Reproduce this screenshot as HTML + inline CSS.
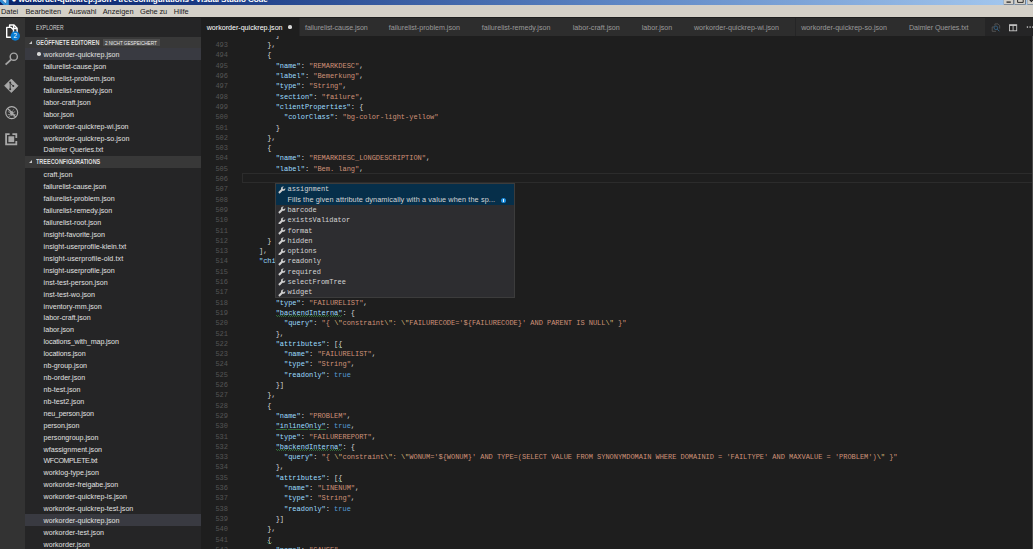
<!DOCTYPE html>
<html><head><meta charset="utf-8"><title>vscode</title>
<style>
*{box-sizing:border-box;margin:0;padding:0}
html,body{width:1033px;height:549px;overflow:hidden;background:#1e1e1e;font-family:"Liberation Sans",sans-serif;}
#root{position:absolute;left:0;top:0;width:1033px;height:549px;overflow:hidden;background:#1e1e1e}
.abs{position:absolute}
#title{left:0;top:0;width:1033px;height:5.2px;background:linear-gradient(90deg,#0a246a 0%,#1a3a84 20%,#5d86c4 60%,#a6caf0 100%);overflow:hidden}
#title .tt{position:absolute;left:11.5px;top:-5.1px;font-weight:bold;font-size:8.1px;line-height:10px;color:#fff;white-space:pre;letter-spacing:-0.092px}
#menu{left:0;top:5.2px;width:1033px;height:12.2px;background:#d4d0c8}
#menu span{position:absolute;top:2.1px;font-size:7.4px;line-height:9px;color:#1a1a1a;white-space:pre}
#act{left:0;top:17.5px;width:25px;height:532px;background:#333333}
#side{left:25px;top:17.5px;width:175.5px;height:532px;background:#252526}
#tabs{left:200.5px;top:17.5px;width:832.5px;height:18.9px;background:#252526;z-index:3}
.tab{position:absolute;z-index:4;top:17.5px;height:18.9px;background:#2d2d2d;border-right:0.6px solid #252526;color:#9a9a9a;font-size:7.12px;line-height:18.9px;white-space:pre;padding-left:5.6px}
.tab span{position:relative;top:1.1px}
.tab.act{background:#1e1e1e;color:#fff;padding-left:6.2px}
.tdot{position:absolute;right:7.6px;top:7.7px;width:3.7px;height:3.7px;border-radius:50%;background:#d8d8d8}
.hdr{position:absolute;left:25px;width:175.5px;height:11.9px;background:#383838;color:#dedede;font-weight:bold;font-size:5.95px;letter-spacing:-0.26px;line-height:11.9px;white-space:pre}
.hdr .tw{position:absolute;left:4.4px;top:4.6px;width:0;height:0;border-left:3.6px solid transparent;border-bottom:3.6px solid #c8c8c8}
.hdr .tx{position:absolute;left:11px;top:0.6px;font-size:6.3px;letter-spacing:0;transform:scaleX(0.872);transform-origin:0 50%}
.badge{position:absolute;left:77.6px;top:2px;height:7.8px;width:57px;background:#4d4d4d;color:#ececec;font-weight:normal;font-size:5.8px;line-height:7.8px;text-align:center;letter-spacing:-0.1px}
.badge b{font-weight:normal;position:relative;top:1.0px;display:inline-block;transform:scaleX(0.815);transform-origin:50% 50%;margin:0 -7px}
.row{position:absolute;left:25px;width:175.5px;height:11.92px;color:#e0e0e0;font-size:7.12px;line-height:11.92px;white-space:pre;padding-left:18.6px}
.row.sel{background:#393a41}
.row span{position:relative;top:1.75px}
.dot{position:absolute;left:12.2px;top:4.1px;width:3.6px;height:3.6px;border-radius:50%;background:#d8d8d8}
.cl{position:absolute;left:0;width:1033px;height:10.3px;line-height:10.3px;font-family:"Liberation Mono",monospace;font-size:7.0px;letter-spacing:-0.028px;white-space:pre}
.ln{position:absolute;left:215.4px;color:#555}
.ct{position:absolute;left:225.6px}
.k{color:#9cdcfe} .kw{color:#9cdcfe;background:repeating-linear-gradient(90deg,#3f9b4a 0 1px,transparent 1px 2.1px) 0 calc(100% - 0.9px)/100% 0.6px no-repeat,repeating-linear-gradient(90deg,transparent 0 1.05px,#3f9b4a 1.05px 2.1px) 0 calc(100% - 0.35px)/100% 0.6px no-repeat} .s{color:#ce9178} .p{color:#d4d4d4} .pw{color:#d4d4d4;background:repeating-linear-gradient(90deg,#3f9b4a 0 1px,transparent 1px 2.1px) 0 calc(100% - 0.9px)/100% 0.6px no-repeat,repeating-linear-gradient(90deg,transparent 0 1.05px,#3f9b4a 1.05px 2.1px) 0 calc(100% - 0.35px)/100% 0.6px no-repeat} .b{color:#569cd6} .e{color:#d7ba7d}
#curline{left:241.8px;top:173.2px;width:795px;height:10.3px;border:0.8px solid #2c2c2c}
#sw{left:275.0px;top:183.4px;width:240.4px;height:114.40px;background:#2d2d30;border:0.6px solid #3c3c3c;overflow:hidden}
#sw .selbg{position:absolute;left:0;top:0;width:100%;height:20.60px;background:#062f4a}
.si{position:absolute;left:0;width:100%;height:10.3px;line-height:10.3px;font-family:"Liberation Mono",monospace;font-size:7.0px;letter-spacing:-0.028px;color:#d4d4d4;white-space:pre}
.si span{position:absolute;left:11.5px}
.wr{position:absolute;left:1.9px;top:1.4px;width:7.8px;height:7.8px}
.wb{top:0;height:4.4px;overflow:hidden;background:#d4d0c8;border-right:0.8px solid #404040;border-bottom:0.8px solid #404040;border-left:0.6px solid #fff} .wb i{position:absolute;background:#000}
.sd{position:absolute;left:11.5px;height:10.3px;line-height:10.3px;font-size:7.3px;letter-spacing:0.1px;color:#d4d4d4;white-space:pre}
.info{position:absolute;left:225.4px;top:13.2px;width:5px;height:5px;border-radius:50%;background:#1d8fe0}
.info::after{content:'';position:absolute;left:2.1px;top:1.2px;width:0.9px;height:2.8px;background:#e8f2fb}
</style></head><body><div id="root">
<div id="title" class="abs"><svg class="abs" style="left:0;top:0" width="10" height="6" viewBox="0 0 10 6"><path d="M0 0 H2.2 L5.4 3.4 L6.4 2.4 V0 H8.8 V5.6 H6.6 L5.6 4.8 L4.4 5.6 L0 1.4 Z" fill="#2f8fd6"/><path d="M2.2 0 L5.4 3.2 L6.4 2.2 V0 Z" fill="#cfe6f7"/></svg><span class="tt">&#9679; workorder-quickrep.json - treeConfigurations - Visual Studio Code</span></div>
<div id="menu" class="abs"><span style="left:1px">Datei</span><span style="left:25.4px">Bearbeiten</span><span style="left:68.5px">Auswahl</span><span style="left:102.7px">Anzeigen</span><span style="left:140px;letter-spacing:-0.12px">Gehe zu</span><span style="left:173.8px">Hilfe</span></div>
<div id="act" class="abs"></div>
<div id="side" class="abs"></div>
<div class="abs" style="left:36px;top:23.2px;font-size:6.5px;line-height:10px;color:#d2d2d2;white-space:pre;transform:scaleX(0.78);transform-origin:0 50%">EXPLORER</div>
<div class="hdr" style="top:36.7px;height:11.65px"><i class="tw"></i><span class="tx">GEÖFFNETE EDITOREN</span><span class="badge"><b>2 NICHT GESPEICHERT</b></span></div>
<div class="hdr" style="top:155.9px"><i class="tw"></i><span class="tx">TREECONFIGURATIONS</span></div>
<div class="row sel" style="top:48.35px"><i class="dot"></i><span>workorder-quickrep.json</span></div>
<div class="row" style="top:60.27px"><span style="letter-spacing:-0.08px">failurelist-cause.json</span></div>
<div class="row" style="top:72.19px"><span>failurelist-problem.json</span></div>
<div class="row" style="top:84.11px"><span>failurelist-remedy.json</span></div>
<div class="row" style="top:96.03px"><span>labor-craft.json</span></div>
<div class="row" style="top:107.95px"><span>labor.json</span></div>
<div class="row" style="top:119.87px"><span>workorder-quickrep-wi.json</span></div>
<div class="row" style="top:131.79px"><span>workorder-quickrep-so.json</span></div>
<div class="row" style="top:143.71px"><span style="letter-spacing:-0.07px">Daimler Queries.txt</span></div>
<div class="row" style="top:168.64px"><span>craft.json</span></div>
<div class="row" style="top:180.56px"><span style="letter-spacing:-0.08px">failurelist-cause.json</span></div>
<div class="row" style="top:192.48px"><span>failurelist-problem.json</span></div>
<div class="row" style="top:204.40px"><span>failurelist-remedy.json</span></div>
<div class="row" style="top:216.32px"><span>failurelist-root.json</span></div>
<div class="row" style="top:228.24px"><span>insight-favorite.json</span></div>
<div class="row" style="top:240.16px"><span>insight-userprofile-klein.txt</span></div>
<div class="row" style="top:252.08px"><span style="letter-spacing:0.08px">insight-userprofile-old.txt</span></div>
<div class="row" style="top:264.00px"><span>insight-userprofile.json</span></div>
<div class="row" style="top:275.92px"><span>inst-test-person.json</span></div>
<div class="row" style="top:287.84px"><span>inst-test-wo.json</span></div>
<div class="row" style="top:299.76px"><span>inventory-mm.json</span></div>
<div class="row" style="top:311.68px"><span>labor-craft.json</span></div>
<div class="row" style="top:323.60px"><span>labor.json</span></div>
<div class="row" style="top:335.52px"><span style="letter-spacing:-0.1px">locations_with_map.json</span></div>
<div class="row" style="top:347.44px"><span style="letter-spacing:-0.08px">locations.json</span></div>
<div class="row" style="top:359.36px"><span>nb-group.json</span></div>
<div class="row" style="top:371.28px"><span>nb-order.json</span></div>
<div class="row" style="top:383.20px"><span>nb-test.json</span></div>
<div class="row" style="top:395.12px"><span>nb-test2.json</span></div>
<div class="row" style="top:407.04px"><span style="letter-spacing:-0.16px">neu_person.json</span></div>
<div class="row" style="top:418.96px"><span style="letter-spacing:-0.1px">person.json</span></div>
<div class="row" style="top:430.88px"><span>persongroup.json</span></div>
<div class="row" style="top:442.80px"><span>wfassignment.json</span></div>
<div class="row" style="top:454.72px"><span style="letter-spacing:-0.44px">WFCOMPLETE.txt</span></div>
<div class="row" style="top:466.64px"><span>worklog-type.json</span></div>
<div class="row" style="top:478.56px"><span>workorder-freigabe.json</span></div>
<div class="row" style="top:490.48px"><span>workorder-quickrep-is.json</span></div>
<div class="row" style="top:502.40px"><span>workorder-quickrep-test.json</span></div>
<div class="row sel" style="top:514.32px"><span>workorder-quickrep.json</span></div>
<div class="row" style="top:526.24px"><span>workorder-test.json</span></div>
<div class="row" style="top:538.16px"><span>workorder.json</span></div>
<div id="tabs" class="abs"></div>
<div class="tab act" style="left:200.5px;width:99.6px"><span>workorder-quickrep.json</span><i class="tdot"></i></div>
<div class="tab" style="left:299.5px;width:84.3px"><span style="letter-spacing:-0.08px">failurelist-cause.json</span></div>
<div class="tab" style="left:383.2px;width:93.6px"><span>failurelist-problem.json</span></div>
<div class="tab" style="left:476.2px;width:91.5px"><span>failurelist-remedy.json</span></div>
<div class="tab" style="left:567.1px;width:69.7px"><span>labor-craft.json</span></div>
<div class="tab" style="left:636.2px;width:52.8px"><span>labor.json</span></div>
<div class="tab" style="left:688.4px;width:107.8px"><span>workorder-quickrep-wi.json</span></div>
<div class="tab" style="left:795.6px;width:108.4px"><span>workorder-quickrep-so.json</span></div>
<div class="tab" style="left:903.4px;width:82.6px"><span style="letter-spacing:-0.07px">Daimler Queries.txt</span></div>
<div id="editor">
<div class="cl" style="top:29.80px"><span class="ct"><span class="p">            }</span></span></div>
<div class="cl" style="top:40.10px"><span class="ln">493</span><span class="ct"><span class="p">          },</span></span></div>
<div class="cl" style="top:50.40px"><span class="ln">494</span><span class="ct"><span class="p">          {</span></span></div>
<div class="cl" style="top:60.70px"><span class="ln">495</span><span class="ct"><span class="p">            </span><span class="k">"name"</span><span class="p">: </span><span class="s">"REMARKDESC"</span><span class="p">,</span></span></div>
<div class="cl" style="top:71.00px"><span class="ln">496</span><span class="ct"><span class="p">            </span><span class="k">"label"</span><span class="p">: </span><span class="s">"Bemerkung"</span><span class="p">,</span></span></div>
<div class="cl" style="top:81.30px"><span class="ln">497</span><span class="ct"><span class="p">            </span><span class="k">"type"</span><span class="p">: </span><span class="s">"String"</span><span class="p">,</span></span></div>
<div class="cl" style="top:91.60px"><span class="ln">498</span><span class="ct"><span class="p">            </span><span class="k">"section"</span><span class="p">: </span><span class="s">"failure"</span><span class="p">,</span></span></div>
<div class="cl" style="top:101.90px"><span class="ln">499</span><span class="ct"><span class="p">            </span><span class="k">"clientProperties"</span><span class="p">: {</span></span></div>
<div class="cl" style="top:112.20px"><span class="ln">500</span><span class="ct"><span class="p">              </span><span class="k">"colorClass"</span><span class="p">: </span><span class="s">"bg-color-light-yellow"</span></span></div>
<div class="cl" style="top:122.50px"><span class="ln">501</span><span class="ct"><span class="p">            }</span></span></div>
<div class="cl" style="top:132.80px"><span class="ln">502</span><span class="ct"><span class="p">          },</span></span></div>
<div class="cl" style="top:143.10px"><span class="ln">503</span><span class="ct"><span class="p">          {</span></span></div>
<div class="cl" style="top:153.40px"><span class="ln">504</span><span class="ct"><span class="p">            </span><span class="k">"name"</span><span class="p">: </span><span class="s">"REMARKDESC_LONGDESCRIPTION"</span><span class="p">,</span></span></div>
<div class="cl" style="top:163.70px"><span class="ln">505</span><span class="ct"><span class="p">            </span><span class="k">"label"</span><span class="p">: </span><span class="s">"Bem. lang"</span><span class="p">,</span></span></div>
<div class="cl" style="top:174.00px"><span class="ln">506</span><span class="ct"></span></div>
<div class="cl" style="top:184.30px"><span class="ln">507</span><span class="ct"></span></div>
<div class="cl" style="top:194.60px"><span class="ln">508</span><span class="ct"></span></div>
<div class="cl" style="top:204.90px"><span class="ln">509</span><span class="ct"></span></div>
<div class="cl" style="top:215.20px"><span class="ln">510</span><span class="ct"></span></div>
<div class="cl" style="top:225.50px"><span class="ln">511</span><span class="ct"></span></div>
<div class="cl" style="top:235.80px"><span class="ln">512</span><span class="ct"><span class="p">          }</span></span></div>
<div class="cl" style="top:246.10px"><span class="ln">513</span><span class="ct"><span class="p">        ],</span></span></div>
<div class="cl" style="top:256.40px"><span class="ln">514</span><span class="ct"><span class="p">        </span><span class="k">"children"</span><span class="p">: [</span></span></div>
<div class="cl" style="top:266.70px"><span class="ln">515</span><span class="ct"></span></div>
<div class="cl" style="top:277.00px"><span class="ln">516</span><span class="ct"></span></div>
<div class="cl" style="top:287.30px"><span class="ln">517</span><span class="ct"></span></div>
<div class="cl" style="top:297.60px"><span class="ln">518</span><span class="ct"><span class="p">            </span><span class="k">"type"</span><span class="p">: </span><span class="s">"FAILURELIST"</span><span class="p">,</span></span></div>
<div class="cl" style="top:307.90px"><span class="ln">519</span><span class="ct"><span class="p">            </span><span class="kw">"backendInterna"</span><span class="p">: {</span></span></div>
<div class="cl" style="top:318.20px"><span class="ln">520</span><span class="ct"><span class="p">              </span><span class="k">"query"</span><span class="p">: </span><span class="s">"{ </span><span class="e">\"</span><span class="s">constraint</span><span class="e">\"</span><span class="s">: </span><span class="e">\"</span><span class="s">FAILURECODE='${FAILURECODE}' AND PARENT IS NULL</span><span class="e">\"</span><span class="s"> }"</span></span></div>
<div class="cl" style="top:328.50px"><span class="ln">521</span><span class="ct"><span class="p">            },</span></span></div>
<div class="cl" style="top:338.80px"><span class="ln">522</span><span class="ct"><span class="p">            </span><span class="k">"attributes"</span><span class="p">: [</span><span class="pw">{</span></span></div>
<div class="cl" style="top:349.10px"><span class="ln">523</span><span class="ct"><span class="p">              </span><span class="k">"name"</span><span class="p">: </span><span class="s">"FAILURELIST"</span><span class="p">,</span></span></div>
<div class="cl" style="top:359.40px"><span class="ln">524</span><span class="ct"><span class="p">              </span><span class="k">"type"</span><span class="p">: </span><span class="s">"String"</span><span class="p">,</span></span></div>
<div class="cl" style="top:369.70px"><span class="ln">525</span><span class="ct"><span class="p">              </span><span class="k">"readonly"</span><span class="p">: </span><span class="b">true</span></span></div>
<div class="cl" style="top:380.00px"><span class="ln">526</span><span class="ct"><span class="p">            }]</span></span></div>
<div class="cl" style="top:390.30px"><span class="ln">527</span><span class="ct"><span class="p">          },</span></span></div>
<div class="cl" style="top:400.60px"><span class="ln">528</span><span class="ct"><span class="p">          {</span></span></div>
<div class="cl" style="top:410.90px"><span class="ln">529</span><span class="ct"><span class="p">            </span><span class="k">"name"</span><span class="p">: </span><span class="s">"PROBLEM"</span><span class="p">,</span></span></div>
<div class="cl" style="top:421.20px"><span class="ln">530</span><span class="ct"><span class="p">            </span><span class="kw">"inlineOnly"</span><span class="p">: </span><span class="b">true</span><span class="p">,</span></span></div>
<div class="cl" style="top:431.50px"><span class="ln">531</span><span class="ct"><span class="p">            </span><span class="k">"type"</span><span class="p">: </span><span class="s">"FAILUREREPORT"</span><span class="p">,</span></span></div>
<div class="cl" style="top:441.80px"><span class="ln">532</span><span class="ct"><span class="p">            </span><span class="kw">"backendInterna"</span><span class="p">: {</span></span></div>
<div class="cl" style="top:452.10px"><span class="ln">533</span><span class="ct"><span class="p">              </span><span class="k">"query"</span><span class="p">: </span><span class="s">"{ </span><span class="e">\"</span><span class="s">constraint</span><span class="e">\"</span><span class="s">: </span><span class="e">\"</span><span class="s">WONUM='${WONUM}' AND TYPE=(SELECT VALUE FROM SYNONYMDOMAIN WHERE DOMAINID = 'FAILTYPE' AND MAXVALUE = 'PROBLEM')</span><span class="e">\"</span><span class="s"> }"</span></span></div>
<div class="cl" style="top:462.40px"><span class="ln">534</span><span class="ct"><span class="p">            },</span></span></div>
<div class="cl" style="top:472.70px"><span class="ln">535</span><span class="ct"><span class="p">            </span><span class="k">"attributes"</span><span class="p">: [</span><span class="pw">{</span></span></div>
<div class="cl" style="top:483.00px"><span class="ln">536</span><span class="ct"><span class="p">              </span><span class="k">"name"</span><span class="p">: </span><span class="s">"LINENUM"</span><span class="p">,</span></span></div>
<div class="cl" style="top:493.30px"><span class="ln">537</span><span class="ct"><span class="p">              </span><span class="k">"type"</span><span class="p">: </span><span class="s">"String"</span><span class="p">,</span></span></div>
<div class="cl" style="top:503.60px"><span class="ln">538</span><span class="ct"><span class="p">              </span><span class="k">"readonly"</span><span class="p">: </span><span class="b">true</span></span></div>
<div class="cl" style="top:513.90px"><span class="ln">539</span><span class="ct"><span class="p">            }]</span></span></div>
<div class="cl" style="top:524.20px"><span class="ln">540</span><span class="ct"><span class="p">          },</span></span></div>
<div class="cl" style="top:534.50px"><span class="ln">541</span><span class="ct"><span class="p">          </span><span class="pw">{</span></span></div>
<div class="cl" style="top:544.80px"><span class="ln">542</span><span class="ct"><span class="p">            </span><span class="k">"name"</span><span class="p">: </span><span class="s">"CAUSE"</span><span class="p">,</span></span></div>
<div id="curline" class="abs"></div>
<div class="abs" style="left:1031.5px;top:36.4px;width:1.5px;height:513px;background:#4a4a4a"></div>
<div id="sw" class="abs"><div class="selbg"></div><i class="info"></i>
<div class="si" style="top:0.00px"><svg class="wr" viewBox="0 0 16 16"><path d="M14.8 4.2l-2.5 2.5-2.3-.6-.6-2.3 2.5-2.5c-1.5-.6-3.300-.3-4.500.9-1.200 1.200-1.500 2.900-1 4.400L1.300 11.700c-.6.6-.6 1.700 0 2.300l.7.7c.6.6 1.700.6 2.300 0l5.100-5.100c1.500.5 3.200.2 4.400-1 1.200-1.200 1.500-3 .9-4.500z" fill="#d0d0d0"/></svg><span>assignment</span></div>
<div class="sd" style="top:10.30px">Fills the given attribute dynamically with a value when the sp...</div>
<div class="si" style="top:20.60px"><svg class="wr" viewBox="0 0 16 16"><path d="M14.8 4.2l-2.5 2.5-2.3-.6-.6-2.3 2.5-2.5c-1.5-.6-3.300-.3-4.500.9-1.200 1.200-1.500 2.900-1 4.400L1.300 11.700c-.6.6-.6 1.700 0 2.300l.7.7c.6.6 1.700.6 2.300 0l5.100-5.100c1.500.5 3.200.2 4.400-1 1.200-1.200 1.500-3 .9-4.500z" fill="#d0d0d0"/></svg><span>barcode</span></div>
<div class="si" style="top:30.90px"><svg class="wr" viewBox="0 0 16 16"><path d="M14.8 4.2l-2.5 2.5-2.3-.6-.6-2.3 2.5-2.5c-1.5-.6-3.300-.3-4.500.9-1.200 1.200-1.500 2.900-1 4.400L1.300 11.700c-.6.6-.6 1.700 0 2.300l.7.7c.6.6 1.700.6 2.300 0l5.100-5.100c1.500.5 3.200.2 4.400-1 1.200-1.200 1.500-3 .9-4.500z" fill="#d0d0d0"/></svg><span>existsValidator</span></div>
<div class="si" style="top:41.20px"><svg class="wr" viewBox="0 0 16 16"><path d="M14.8 4.2l-2.5 2.5-2.3-.6-.6-2.3 2.5-2.5c-1.5-.6-3.300-.3-4.500.9-1.200 1.200-1.500 2.900-1 4.400L1.300 11.700c-.6.6-.6 1.700 0 2.300l.7.7c.6.6 1.700.6 2.300 0l5.100-5.100c1.500.5 3.200.2 4.400-1 1.200-1.200 1.500-3 .9-4.500z" fill="#d0d0d0"/></svg><span>format</span></div>
<div class="si" style="top:51.50px"><svg class="wr" viewBox="0 0 16 16"><path d="M14.8 4.2l-2.5 2.5-2.3-.6-.6-2.3 2.5-2.5c-1.5-.6-3.300-.3-4.500.9-1.200 1.200-1.500 2.900-1 4.400L1.300 11.700c-.6.6-.6 1.700 0 2.300l.7.7c.6.6 1.700.6 2.300 0l5.100-5.100c1.500.5 3.200.2 4.400-1 1.200-1.200 1.500-3 .9-4.500z" fill="#d0d0d0"/></svg><span>hidden</span></div>
<div class="si" style="top:61.80px"><svg class="wr" viewBox="0 0 16 16"><path d="M14.8 4.2l-2.5 2.5-2.3-.6-.6-2.3 2.5-2.5c-1.5-.6-3.300-.3-4.500.9-1.200 1.200-1.500 2.900-1 4.400L1.300 11.700c-.6.6-.6 1.700 0 2.300l.7.7c.6.6 1.700.6 2.300 0l5.100-5.100c1.500.5 3.200.2 4.400-1 1.200-1.200 1.500-3 .9-4.500z" fill="#d0d0d0"/></svg><span>options</span></div>
<div class="si" style="top:72.10px"><svg class="wr" viewBox="0 0 16 16"><path d="M14.8 4.2l-2.5 2.5-2.3-.6-.6-2.3 2.5-2.5c-1.5-.6-3.300-.3-4.500.9-1.200 1.200-1.500 2.900-1 4.400L1.300 11.700c-.6.6-.6 1.700 0 2.300l.7.7c.6.6 1.700.6 2.300 0l5.100-5.100c1.500.5 3.200.2 4.400-1 1.200-1.200 1.500-3 .9-4.500z" fill="#d0d0d0"/></svg><span>readonly</span></div>
<div class="si" style="top:82.40px"><svg class="wr" viewBox="0 0 16 16"><path d="M14.8 4.2l-2.5 2.5-2.3-.6-.6-2.3 2.5-2.5c-1.5-.6-3.300-.3-4.500.9-1.200 1.200-1.500 2.900-1 4.400L1.300 11.700c-.6.6-.6 1.700 0 2.300l.7.7c.6.6 1.700.6 2.300 0l5.100-5.100c1.500.5 3.200.2 4.400-1 1.200-1.200 1.500-3 .9-4.500z" fill="#d0d0d0"/></svg><span>required</span></div>
<div class="si" style="top:92.70px"><svg class="wr" viewBox="0 0 16 16"><path d="M14.8 4.2l-2.5 2.5-2.3-.6-.6-2.3 2.5-2.5c-1.5-.6-3.300-.3-4.500.9-1.200 1.200-1.500 2.900-1 4.400L1.300 11.700c-.6.6-.6 1.700 0 2.300l.7.7c.6.6 1.700.6 2.300 0l5.100-5.100c1.500.5 3.200.2 4.400-1 1.200-1.200 1.500-3 .9-4.500z" fill="#d0d0d0"/></svg><span>selectFromTree</span></div>
<div class="si" style="top:103.00px"><svg class="wr" viewBox="0 0 16 16"><path d="M14.8 4.2l-2.5 2.5-2.3-.6-.6-2.3 2.5-2.5c-1.5-.6-3.300-.3-4.500.9-1.200 1.200-1.500 2.900-1 4.400L1.300 11.700c-.6.6-.6 1.700 0 2.300l.7.7c.6.6 1.700.6 2.300 0l5.100-5.100c1.500.5 3.200.2 4.400-1 1.200-1.200 1.500-3 .9-4.500z" fill="#d0d0d0"/></svg><span>widget</span></div>
</div>
</div>

<svg class="abs" style="left:0;top:17.5px" width="25" height="140" viewBox="0 0 25 140">
 <!-- explorer: y offset 17.5 => coordinates are target_y-17.5 -->
 <g fill="none" stroke="#ffffff" stroke-width="1.4" stroke-linejoin="round">
  <path d="M9.6 9.2 V7.0 H14.0 L17.1 10.2 V17.2 H13.6"/>
  <path d="M13.6 7.2 V10.5 H16.9"/>
  <path d="M6.7 9.4 H11.2 L13.5 11.8 V19.2 H6.7 Z"/>
 </g>
 <circle cx="15.3" cy="18.0" r="4.7" fill="#0a7bd0"/>
 <text x="15.3" y="20.2" font-family="Liberation Sans" font-size="6.4" fill="#fff" text-anchor="middle">2</text>
 <!-- search -->
 <g fill="none" stroke="#a6a6a6" stroke-width="1.45">
  <circle cx="13.8" cy="38.7" r="3.6"/>
  <path d="M11.0 41.6 L5.6 46.6" stroke-width="1.9"/>
 </g>
 <!-- git -->
 <g>
  <path d="M11.3 61.1 L18.0 67.8 L11.3 74.5 L4.6 67.8 Z" fill="#a8a8a8" stroke="#a8a8a8" stroke-width="0.8" stroke-linejoin="round"/>
  <g fill="none" stroke="#333" stroke-width="0.9">
   <path d="M10.2 64.0 V71.6"/>
   <path d="M10.2 65.0 L13.2 68.0"/>
  </g>
  <circle cx="10.2" cy="64.6" r="1.0" fill="#333"/>
  <circle cx="10.2" cy="71.3" r="1.0" fill="#333"/>
  <circle cx="13.3" cy="68.0" r="1.0" fill="#333"/>
 </g>
 <!-- debug -->
 <g fill="none" stroke="#b0b0b0" stroke-width="1.15">
  <circle cx="11.7" cy="94.6" r="6.0"/>
  <path d="M7.5 90.4 L15.9 99.2"/>
  <ellipse cx="11.7" cy="95.4" rx="1.7" ry="2.3" fill="#a8a8a8" stroke="none"/>
  <path d="M8.2 93.6 L10.2 94.6 M15.2 93.6 L13.2 94.6 M7.8 96.6 H10 M15.6 96.6 H13.4 M8.6 99 L10.4 97.6 M14.8 99 L13 97.6 M10.6 92.6 L9.8 91.4 M12.8 92.6 L13.6 91.4" stroke-width="0.7"/>
 </g>
 <!-- extensions -->
 <g transform="translate(0,-0.7)">
  <path d="M5.2 116 H9.6 V117.8 H7 V126.2 H15.4 V123.6 H17.2 V128 H5.2 Z" fill="#a8a8a8"/>
  <path d="M12.4 116 H17.2 V120.6 H15.4 V117.8 H12.4 Z" fill="#a8a8a8"/>
  <rect x="8.4" y="119" width="5.8" height="5.8" fill="#a8a8a8"/>
 </g>
</svg>
<!-- editor actions -->
<svg class="abs" style="left:988px;top:17.5px;z-index:6" width="45" height="19" viewBox="0 0 45 19">
 <g fill="none" stroke="#5c5c5c" stroke-width="0.8">
  <path d="M6.2 8.9 H4.2 V13.3 H8.0"/>
  <path d="M6.9 7.6 V5.9 H10.0 L11.7 7.7 V10.6"/>
 </g>
 <circle cx="7.9" cy="9.8" r="1.8" fill="none" stroke="#38678b" stroke-width="0.8"/>
 <path d="M9.3 11.2 L11.4 13.3" stroke="#38678b" stroke-width="0.95"/>
 <rect x="21.5" y="6.8" width="7.2" height="6.0" fill="none" stroke="#c5c5c5" stroke-width="0.9"/>
 <path d="M21.5 7.3 H28.7" stroke="#c5c5c5" stroke-width="1.3"/>
 <path d="M25.1 6.8 V12.8" stroke="#c5c5c5" stroke-width="0.9"/>
 <circle cx="39.4" cy="9.1" r="0.8" fill="#c5c5c5"/><circle cx="42.1" cy="9.1" r="0.8" fill="#c5c5c5"/><circle cx="44.8" cy="9.1" r="0.8" fill="#c5c5c5"/>
</svg>
<!-- window buttons -->
<svg class="abs" style="left:1000px;top:0;z-index:7" width="33" height="6" viewBox="0 0 33 6">
 <g>
  <rect x="3.8" y="-1" width="9.9" height="5.6" fill="#5a5a5a"/>
  <rect x="3.8" y="-1" width="9.2" height="5.1" fill="#d4d0c8"/>
  <rect x="6.5" y="1.5" width="4.3" height="1.2" fill="#1a1a1a"/>
  <rect x="14.6" y="-1" width="11.1" height="5.6" fill="#5a5a5a"/>
  <rect x="14.6" y="-1" width="10.4" height="5.1" fill="#d4d0c8"/>
  <path d="M17.6 -1 V2.4 H23.2 V-1" fill="none" stroke="#1a1a1a" stroke-width="0.9"/>
  <rect x="27.4" y="-1" width="6" height="5.6" fill="#5a5a5a"/>
  <rect x="27.4" y="-1" width="6" height="5.1" fill="#d4d0c8"/>
  <path d="M29.4 -0.6 L31.4 1.4 L33.4 -0.6" fill="none" stroke="#1a1a1a" stroke-width="1.1"/>
 </g>
</svg>
